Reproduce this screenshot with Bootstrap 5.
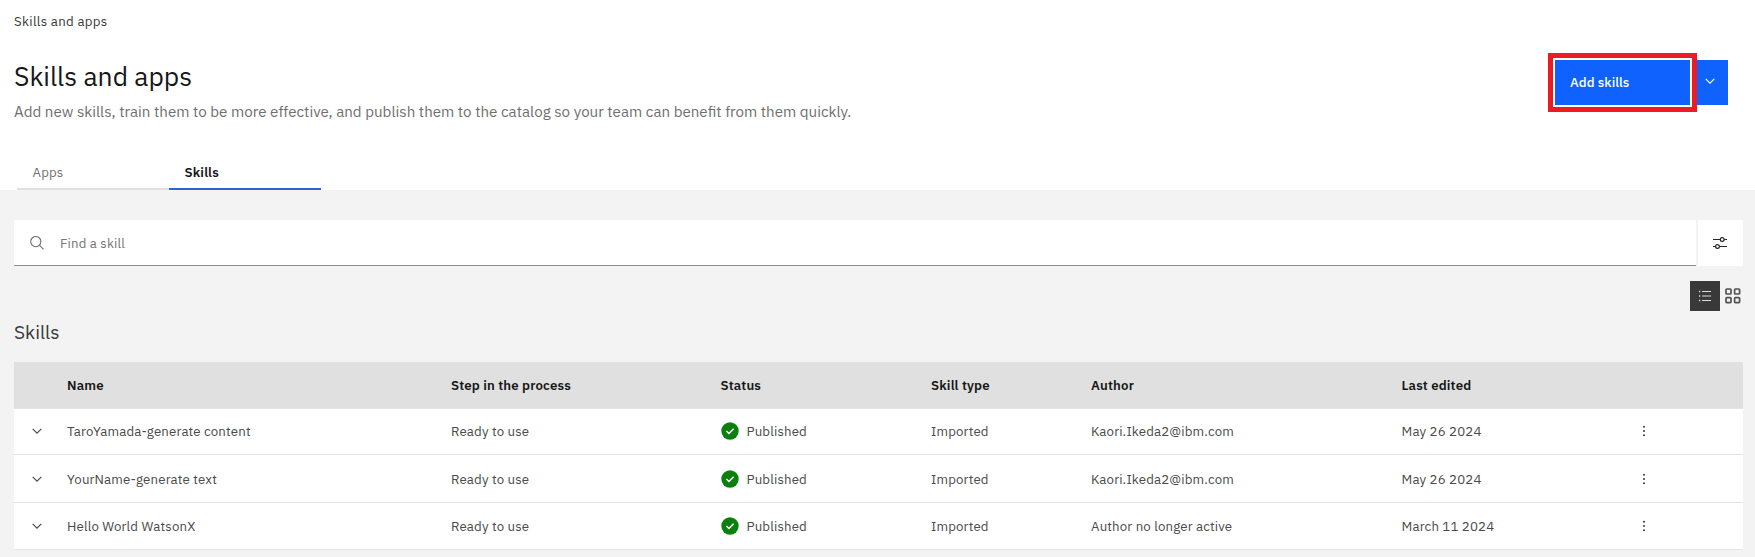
<!DOCTYPE html>
<html lang="en">
<head>
<meta charset="utf-8">
<meta name="viewport" content="width=device-width, initial-scale=1">
<title>Skills and apps</title>
<link rel="stylesheet" href="https://cdn.jsdelivr.net/npm/bootstrap@5.3.0/dist/css/bootstrap.min.css">
<style>
body{font-family:"IBM Plex Sans",Roboto,"Liberation Sans",sans-serif;font-size:13.25px;line-height:18px;letter-spacing:.15px;color:#525252;background:#f3f3f3;overflow:hidden}
svg{display:block;flex:none}
.page-head{height:190px;background:#fff;padding:12px 14px 0}
.crumb{color:#393939;letter-spacing:.3px;margin-bottom:27px}
.page-title{font-size:26.5px;line-height:38px;letter-spacing:0;font-weight:400;color:#161616;margin:0}
.page-sub{font-size:15.15px;line-height:22px;letter-spacing:0;color:#6f6f6f;margin:5px 0 0}
.tab-row{padding-left:3px;margin-top:34px}
.tab-row .nav-link{width:152px;height:34px;padding:7px 15.5px 0;color:#6f6f6f;border-bottom:2px solid #e0e0e0;border-radius:0}
.tab-row .nav-link.active{color:#161616;font-weight:600;border-color:#2a66d9}
.split{margin:48px 13px 0 0;height:45px;align-self:flex-start}
.split .btn{--bs-btn-bg:#0f62fe;--bs-btn-color:#fff;border:0;border-radius:0;font-size:13.25px;line-height:18px;letter-spacing:.05px}
.split .add-btn{width:136px;padding:0 15px 2px;text-align:left;font-weight:500}
.split .more-btn{width:36px;padding:0 1px 4px 0;margin-left:1px;display:flex;align-items:center;justify-content:center}
.callout{position:absolute;left:-7px;top:-7px;width:149px;height:59px;border:5px solid #ed1c24;box-shadow:inset 0 0 0 2px #fff;pointer-events:none}
.content{padding:30px 12px 0 14px}
.search-box{height:46px;background:#fff;border-bottom:1px solid #8d8d8d;padding:0 16px;color:#757575}
.filter-btn{width:45px;height:46px;background:#fff;margin-left:2px;padding-right:2px}
.view-switch{margin-top:15px;gap:5px;padding-right:2px}
.view-on{width:30px;height:30px;background:#393939}
.list-title{font-size:19.1px;line-height:26px;letter-spacing:0;font-weight:400;color:#393939;margin:8px 0 17px}
.skill-table{table-layout:fixed;width:100%;margin:0;border-collapse:separate;border-spacing:0;color:#4a4a4a;--bs-table-bg:#fff}
.skill-table>:not(caption)>*>*{padding:0;vertical-align:middle;border-bottom:1px solid #e4e4e4;color:inherit}
.skill-table thead th{background:#e0e0e0;color:#161616;font-weight:600;height:47px}
.skill-table tbody td{height:47px}
.skill-table tbody tr:first-child td{height:46px;padding-bottom:1px}
.skill-table tbody tr:nth-child(2) td{height:48px}
.row-chev{margin-left:18px}
.status-cell{gap:8px}
</style>
</head>
<body>
<svg class="d-none">
<symbol id="chev" viewBox="0 0 10 6"><path d="M.7.8 5 5.1 9.3.8" fill="none" stroke="currentColor" stroke-width="1.2"/></symbol>
<symbol id="ok" viewBox="0 0 18 18"><circle cx="9" cy="9" r="8.7" fill="#0b800f"/><path d="m5.4 9.1 2.5 2.4 4.7-4.7" fill="none" stroke="#fff" stroke-width="1.4"/></symbol>
<symbol id="dots" viewBox="0 0 4 12"><g fill="#393939"><circle cx="2" cy="1.7" r="1"/><circle cx="2" cy="6" r="1"/><circle cx="2" cy="10.3" r="1"/></g></symbol>
</svg>
<header class="page-head">
  <div class="d-flex justify-content-between">
    <div>
      <div class="crumb">Skills and apps</div>
      <h1 class="page-title">Skills and apps</h1>
      <p class="page-sub">Add new skills, train them to be more effective, and publish them to the catalog so your team can benefit from them quickly.</p>
    </div>
    <div class="split d-flex position-relative">
      <button class="btn add-btn">Add skills</button>
      <button class="btn more-btn" aria-label="More"><svg width="10" height="6"><use href="#chev"/></svg></button>
      <div class="callout"></div>
    </div>
  </div>
  <nav class="nav tab-row">
    <a class="nav-link">Apps</a>
    <a class="nav-link active">Skills</a>
  </nav>
</header>
<main class="content">
  <div class="d-flex">
    <div class="search-box flex-grow-1 d-flex align-items-center gap-3">
      <svg width="14" height="14" viewBox="0 0 14 14" fill="none" stroke="#6f6f6f" stroke-width="1.1"><circle cx="5.8" cy="5.6" r="5.1"/><path d="m9.4 9.2 4.2 4.2"/></svg>
      <span>Find a skill</span>
    </div>
    <div class="filter-btn d-flex align-items-center justify-content-center">
      <svg width="14" height="12" viewBox="0 0 14 12" fill="none" stroke="#262626" stroke-width="1.2"><path d="M0 2.5h7.2M11.3 2.5H14M0 9.5h2.5M6.6 9.5H14"/><circle cx="9.2" cy="2.5" r="1.9"/><circle cx="4.5" cy="9.5" r="1.9"/></svg>
    </div>
  </div>
  <div class="view-switch d-flex justify-content-end align-items-center">
    <div class="view-on d-flex align-items-center justify-content-center">
      <svg width="12" height="12" viewBox="0 0 12 12" fill="#ddd"><path d="M3 1h9v1H3zM3 5.5h9v1H3zM3 10h9v1H3zM0 .8h1.2v1.4H0zM0 5.3h1.2v1.4H0zM0 9.8h1.2v1.4H0z"/></svg>
    </div>
    <svg width="16" height="16" viewBox="0 0 16 16" fill="none" stroke="#525252" stroke-width="1.7"><rect x="1" y="1" width="5" height="5" rx=".8"/><rect x="9.6" y="1" width="5" height="5" rx=".8"/><rect x="1" y="9.6" width="5" height="5" rx=".8"/><rect x="9.6" y="9.6" width="5" height="5" rx=".8"/></svg>
  </div>
  <h2 class="list-title">Skills</h2>
  <table class="table skill-table">
    <colgroup><col style="width:53px"><col style="width:384px"><col style="width:269.5px"><col style="width:210.5px"><col style="width:160px"><col style="width:310.5px"><col style="width:240.5px"><col></colgroup>
    <thead><tr><th></th><th>Name</th><th>Step in the process</th><th>Status</th><th>Skill type</th><th>Author</th><th>Last edited</th><th></th></tr></thead>
    <tbody id="rows"></tbody>
  </table>
</main>
<script>
const skills=[
  ['TaroYamada-generate content','Kaori.Ikeda2@ibm.com','May 26 2024'],
  ['YourName-generate text','Kaori.Ikeda2@ibm.com','May 26 2024'],
  ['Hello World WatsonX','Author no longer active','March 11 2024']
];
document.getElementById('rows').innerHTML=skills.map(([name,author,date])=>`<tr>
<td><svg class="row-chev" width="10" height="6"><use href="#chev"/></svg></td>
<td>${name}</td><td>Ready to use</td>
<td><div class="status-cell d-flex align-items-center"><svg width="18" height="18"><use href="#ok"/></svg>Published</div></td>
<td>Imported</td><td>${author}</td><td>${date}</td>
<td><svg width="4" height="12"><use href="#dots"/></svg></td></tr>`).join('');
</script>
<script src="https://cdn.jsdelivr.net/npm/bootstrap@5.3.0/dist/js/bootstrap.bundle.min.js"></script>
</body>
</html>
